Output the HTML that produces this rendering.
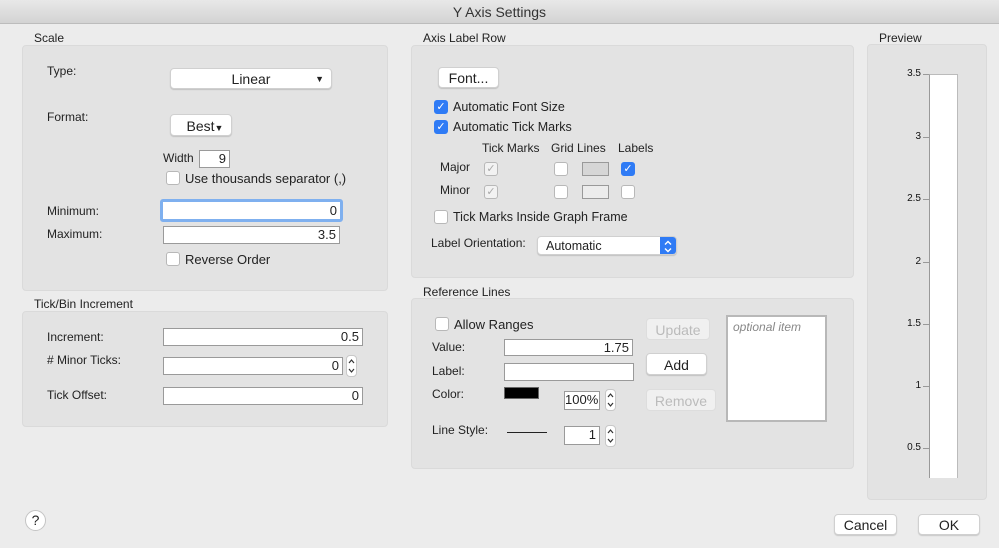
<!DOCTYPE html><html><head><style>
*{box-sizing:border-box;margin:0;padding:0}
body{width:999px;height:548px;background:#ececec;font-family:"Liberation Sans",sans-serif;font-size:12px;color:#222;position:relative;overflow:hidden}
.a{position:absolute;white-space:nowrap}
.p{position:absolute;background:#e3e3e3;border:1px solid #dadada;border-radius:4px}
.t{position:absolute;background:#fff;border:1px solid #9a9a9a;text-align:right;padding-right:3px;font-size:13px;line-height:15px}
.b{position:absolute;background:#fff;border:1px solid #d0d0d0;border-radius:4px;box-shadow:0 1px 1px rgba(0,0,0,.15);text-align:center;font-size:14px}
.c{position:absolute;width:14px;height:14px;background:#fff;border:1px solid #b8b8b8;border-radius:3px}
.cb{background:#2f7bf5;border-color:#2f7bf5;color:#fff;font-size:11px;line-height:12px;text-align:center}
.cg{color:#aaa;font-size:11px;line-height:12px;text-align:center;background:#f2f2f2}
.s{position:absolute;width:11px;height:22px;background:#fff;border:1px solid #c8c8c8;border-radius:4px}
.d{color:#bbb;box-shadow:none;border-color:#ddd;background:#f0f0f0}
.y{position:absolute;width:26px;text-align:right;font-size:10px;color:#111}
</style></head><body>
<div class="a" style="left:0;top:0;width:999px;height:24px;background:linear-gradient(#e8e8e8,#d3d3d3);border-bottom:1px solid #bcbcbc;text-align:center;font-size:14px;line-height:25px;color:#333">Y Axis Settings</div>

<div class="a" style="left:34px;top:31px;font-size:12px">Scale</div>
<div class="p" style="left:22px;top:45px;width:366px;height:246px"></div>
<div class="a" style="left:47px;top:64px">Type:</div>
<div class="b" style="left:170px;top:68px;width:162px;height:21px;line-height:21px">Linear<span style="position:absolute;right:7px;font-size:9px">▼</span></div>
<div class="a" style="left:47px;top:110px">Format:</div>
<div class="b" style="left:170px;top:114px;width:62px;height:22px;line-height:22px;padding-left:8px">Best<span style="font-size:9px">▼</span></div>
<div class="a" style="left:163px;top:151px;font-size:12px">Width</div>
<div class="t" style="left:199px;top:150px;width:31px;height:18px">9</div>
<div class="c" style="left:166px;top:171px"></div>
<div class="a" style="left:185px;top:171px;font-size:13px">Use thousands separator (,)</div>
<div class="a" style="left:47px;top:204px">Minimum:</div>
<div class="t" style="left:160px;top:199px;width:183px;height:23px;border:3px solid #7fb0ef;border-radius:3px;line-height:17px">0</div>
<div class="a" style="left:47px;top:227px">Maximum:</div>
<div class="t" style="left:163px;top:226px;width:177px;height:18px">3.5</div>
<div class="c" style="left:166px;top:252px"></div>
<div class="a" style="left:185px;top:252px;font-size:13px">Reverse Order</div>

<div class="a" style="left:34px;top:297px">Tick/Bin Increment</div>
<div class="p" style="left:22px;top:311px;width:366px;height:116px"></div>
<div class="a" style="left:47px;top:330px">Increment:</div>
<div class="t" style="left:163px;top:328px;width:200px;height:18px">0.5</div>
<div class="a" style="left:47px;top:353px"># Minor Ticks:</div>
<div class="t" style="left:163px;top:357px;width:180px;height:18px">0</div>
<div class="s" style="left:346px;top:355px"><svg width="9" height="20"><path d="M2 7L4.5 4L7 7M2 13L4.5 16L7 13" fill="none" stroke="#333" stroke-width="1.2"/></svg></div>
<div class="a" style="left:47px;top:388px">Tick Offset:</div>
<div class="t" style="left:163px;top:387px;width:200px;height:18px">0</div>

<div class="a" style="left:423px;top:31px">Axis Label Row</div>
<div class="p" style="left:411px;top:45px;width:443px;height:233px"></div>
<div class="b" style="left:438px;top:67px;width:61px;height:21px;line-height:21px">Font...</div>
<div class="c cb" style="left:434px;top:100px">✓</div>
<div class="a" style="left:453px;top:100px;font-size:12.5px">Automatic Font Size</div>
<div class="c cb" style="left:434px;top:120px">✓</div>
<div class="a" style="left:453px;top:120px;font-size:12.5px">Automatic Tick Marks</div>
<div class="a" style="left:482px;top:141px">Tick Marks</div>
<div class="a" style="left:551px;top:141px">Grid Lines</div>
<div class="a" style="left:618px;top:141px">Labels</div>
<div class="a" style="left:440px;top:160px">Major</div>
<div class="c cg" style="left:484px;top:162px">✓</div>
<div class="c" style="left:554px;top:162px"></div>
<div class="a" style="left:582px;top:162px;width:27px;height:14px;background:#d6d6d6;border:1px solid #999"></div>
<div class="c cb" style="left:621px;top:162px">✓</div>
<div class="a" style="left:440px;top:183px">Minor</div>
<div class="c cg" style="left:484px;top:185px">✓</div>
<div class="c" style="left:554px;top:185px"></div>
<div class="a" style="left:582px;top:185px;width:27px;height:14px;background:#ececec;border:1px solid #999"></div>
<div class="c" style="left:621px;top:185px"></div>
<div class="c" style="left:434px;top:210px"></div>
<div class="a" style="left:453px;top:210px;font-size:12.5px">Tick Marks Inside Graph Frame</div>
<div class="a" style="left:431px;top:236px">Label Orientation:</div>
<div class="b" style="left:537px;top:236px;width:140px;height:19px;line-height:18px;font-size:12.5px;text-align:left;padding-left:8px;overflow:hidden">Automatic<span style="position:absolute;right:0;top:0;width:16px;height:19px;background:#2f7bf5"><svg width="16" height="19"><path d="M5 7.5L8 4.5L11 7.5M5 11.5L8 14.5L11 11.5" fill="none" stroke="#fff" stroke-width="1.4"/></svg></span></div>

<div class="a" style="left:423px;top:285px">Reference Lines</div>
<div class="p" style="left:411px;top:298px;width:443px;height:171px"></div>
<div class="c" style="left:435px;top:317px"></div>
<div class="a" style="left:454px;top:317px;font-size:13px">Allow Ranges</div>
<div class="a" style="left:432px;top:340px">Value:</div>
<div class="t" style="left:504px;top:339px;width:129px;height:17px">1.75</div>
<div class="a" style="left:432px;top:364px">Label:</div>
<div class="t" style="left:504px;top:363px;width:130px;height:18px"></div>
<div class="a" style="left:432px;top:387px">Color:</div>
<div class="a" style="left:504px;top:387px;width:35px;height:12px;background:#000;border:1px solid #666"></div>
<div class="t" style="left:564px;top:391px;width:36px;height:19px;padding-right:1px">100%</div>
<div class="s" style="left:605px;top:389px"><svg width="9" height="20"><path d="M2 7L4.5 4L7 7M2 13L4.5 16L7 13" fill="none" stroke="#333" stroke-width="1.2"/></svg></div>
<div class="a" style="left:432px;top:423px">Line Style:</div>
<div class="a" style="left:507px;top:432px;width:40px;height:1px;background:#222"></div>
<div class="t" style="left:564px;top:426px;width:36px;height:19px">1</div>
<div class="s" style="left:605px;top:425px"><svg width="9" height="20"><path d="M2 7L4.5 4L7 7M2 13L4.5 16L7 13" fill="none" stroke="#333" stroke-width="1.2"/></svg></div>
<div class="b d" style="left:646px;top:318px;width:64px;height:22px;line-height:22px">Update</div>
<div class="b" style="left:646px;top:353px;width:61px;height:22px;line-height:22px">Add</div>
<div class="b d" style="left:646px;top:389px;width:70px;height:22px;line-height:22px">Remove</div>
<div class="a" style="left:726px;top:315px;width:101px;height:107px;background:#fff;border:2px solid #b8b8b8;color:#888;font-style:italic;padding:3px 5px;font-size:12px">optional item</div>

<div class="a" style="left:879px;top:31px">Preview</div>
<div class="p" style="left:867px;top:44px;width:120px;height:456px"></div>
<div class="a" style="left:929px;top:74px;width:29px;height:404px;background:#fff;border-left:1px solid #999;border-right:1px solid #bbb;border-top:1px solid #bbb"></div>
<div class="y" style="left:895px;top:68px">3.5</div>
<div class="y" style="left:895px;top:131px">3</div>
<div class="y" style="left:895px;top:193px">2.5</div>
<div class="y" style="left:895px;top:256px">2</div>
<div class="y" style="left:895px;top:318px">1.5</div>
<div class="y" style="left:895px;top:380px">1</div>
<div class="y" style="left:895px;top:442px">0.5</div>
<div class="a" style="left:923px;top:74px;width:6px;height:1px;background:#999;box-shadow:0 63px #999,0 125px #999,0 188px #999,0 250px #999,0 312px #999,0 374px #999"></div>

<div class="a" style="left:25px;top:510px;width:21px;height:21px;border-radius:50%;background:#fff;border:1px solid #c4c4c4;text-align:center;line-height:19px;font-size:14px">?</div>
<div class="b" style="left:834px;top:514px;width:63px;height:21px;line-height:21px">Cancel</div>
<div class="b" style="left:918px;top:514px;width:62px;height:21px;line-height:21px">OK</div>
</body></html>
